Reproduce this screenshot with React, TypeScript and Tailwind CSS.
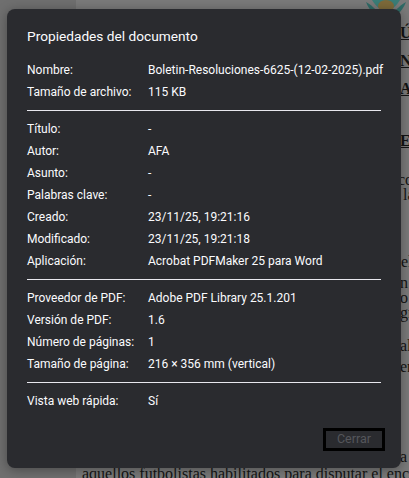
import React from 'react'

// Ventana "Propiedades del documento" sobre la página del PDF atenuada.

type Row = { label: string; value: string }

const groups: Row[][] = [
  [
    { label: 'Nombre:', value: 'Boletin-Resoluciones-6625-(12-02-2025).pdf' },
    { label: 'Tamaño de archivo:', value: '115 KB' },
  ],
  [
    { label: 'Título:', value: '-' },
    { label: 'Autor:', value: 'AFA' },
    { label: 'Asunto:', value: '-' },
    { label: 'Palabras clave:', value: '-' },
    { label: 'Creado:', value: '23/11/25, 19:21:16' },
    { label: 'Modificado:', value: '23/11/25, 19:21:18' },
    { label: 'Aplicación:', value: 'Acrobat PDFMaker 25 para Word' },
  ],
  [
    { label: 'Proveedor de PDF:', value: 'Adobe PDF Library 25.1.201' },
    { label: 'Versión de PDF:', value: '1.6' },
    { label: 'Número de páginas:', value: '1' },
    { label: 'Tamaño de página:', value: '216 × 356 mm (vertical)' },
  ],
  [{ label: 'Vista web rápida:', value: 'Sí' }],
]

function Emblem() {
  return (
    <svg width="44" height="22" viewBox="0 0 44 22" className="block">
      <path d="M2 2 C10 6 14 14 22 16 C30 14 34 6 42 2 C38 12 30 20 22 20 C14 20 6 12 2 2 Z" fill="#2f6a66" />
      <path d="M8 0 C12 6 16 10 22 12 C28 10 32 6 36 0 Z" fill="#3a7d77" />
      <ellipse cx="22" cy="6" rx="8" ry="6" fill="#7d6a3a" />
    </svg>
  )
}

function DocumentBehind() {
  return (
    <div className="absolute inset-0 bg-[#6f6f6f]">
      <div className="ml-[76px] h-full bg-[#7a7a7a] text-[#141414] text-[16px] leading-[18px] whitespace-nowrap" style={{ fontFamily: '"Liberation Serif", serif' }}>
        <div className="pl-[288px] h-[24px]">
          <Emblem />
        </div>
        <div className="pl-[324px] font-bold"><span className="underline">ÚBLICA</span></div>
        <div className="pl-[324px] mt-[10px] font-bold"><span className="underline">NTINA</span></div>
        <div className="pl-[324px] mt-[10px] font-bold"><span className="underline">ACIÓN</span></div>
        <div className="pl-[324px] mt-[34px] font-bold"><span className="underline">ES</span></div>
        <div className="pl-[322px] mt-[24px] h-[12px] leading-[12px]">con</div>
        <div className="pl-[327px] h-[18px]">la</div>
        <div className="pl-[325px] mt-[46px] h-[24px] leading-[24px]">el</div>
        <div className="pl-[324px] h-[18px]">n</div>
        <div className="pl-[324px] h-[12px] leading-[12px]">o</div>
        <div className="pl-[324px] h-[18px]">gra</div>
        <div className="pl-[324px] mt-[12px] h-[24px] leading-[24px]">al</div>
        <div className="pl-[324px] h-[18px]">en</div>
        <div className="pl-[324px] mt-[73px] h-[16px] leading-[16px]">a</div>
        <div className="pl-[6px] h-[18px]">aquellos futbolistas habilitados para disputar el encuentro</div>
        <div className="pl-[6px]">válidamente en el campo de juego señalado</div>
      </div>
    </div>
  )
}

function PropRow({ label, value }: Row) {
  return (
    <div className="flex h-[22px] items-center">
      <div className="w-[121px] shrink-0">{label}</div>
      <div className="whitespace-nowrap">{value}</div>
    </div>
  )
}

export default function App() {
  return (
    <div className="relative w-[409px] h-[478px] overflow-hidden">
      <DocumentBehind />

      <div
        className="absolute left-[7px] top-[9px] w-[394px] h-[459px] rounded-[8px] bg-[#2a2b2f] text-[#fbfbfe] shadow-[0_2px_12px_rgba(0,0,0,0.35)] pt-[17px] pl-[20px] pr-[20px] text-[12px]"
        style={{ fontFamily: 'Roboto, "Noto Sans", sans-serif' }}
      >
        <h1 className="h-[20px] leading-[20px] text-[13.7px] font-normal">Propiedades del documento</h1>

        <div className="mt-[13px]">
          {groups.map((g, i) => (
            <div key={i}>
              {i > 0 && <div className="my-[7px] h-px bg-[#e8e8ee]" />}
              {g.map((r) => (
                <PropRow key={r.label} {...r} />
              ))}
            </div>
          ))}
        </div>

        <div className="flex justify-end mt-[16px] -mr-[4px]">
          <button className="w-[62px] h-[23px] border-[3px] border-black bg-[#2a2b2f] text-[#55565b] text-[12.5px] leading-none">
            Cerrar
          </button>
        </div>
      </div>
    </div>
  )
}
